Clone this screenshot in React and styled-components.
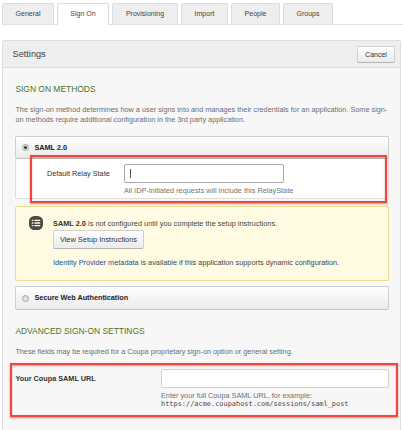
import React from "react";
import styled, { createGlobalStyle, css } from "styled-components";

const GlobalStyle = createGlobalStyle`
  *, *::before, *::after { box-sizing: border-box; }
  body {
    margin: 0;
    background: #fff;
    color: #444;
    font-family: "Liberation Sans", Arial, sans-serif;
    font-size: 7.3px;
    line-height: 9.5px;
    overflow: hidden;
  }
`;

const raised = css`
  border: 1px solid #d0d0d0;
  border-radius: 2px;
  background: linear-gradient(#fefefe, #ebebeb);
`;

const Page = styled.div`
  width: 403px;
  height: 430px;
  overflow: hidden;
  padding: 3px 0 0 2px;
`;

const TabBar = styled.nav`
  display: flex;
  gap: 3px;
  height: 22px;
  margin-bottom: 15px;
  border-bottom: 1px solid #e1e1e1;
`;

const Tab = styled.a`
  width: ${(p) => p.$width}px;
  height: ${(p) => (p.$active ? 22 : 21)}px;
  border: 1px solid #dcdcdc;
  border-bottom: 0;
  border-radius: 2px 2px 0 0;
  background: ${(p) => (p.$active ? "#fff" : "#eee")};
  line-height: 20px;
  font-size: 7px;
  text-align: center;
  white-space: nowrap;
`;

const Panel = styled.section`
  width: 399px;
  height: 400px;
  border: 1px solid #dedede;
  border-radius: 2px 2px 0 0;
  background: #f7f7f7;
`;

const PanelHeader = styled.header`
  display: flex;
  align-items: center;
  justify-content: space-between;
  height: 27px;
  padding: 0 5px 0 9.5px;
  border-bottom: 1px solid #dedede;
  background: #eee;
`;

const PanelTitle = styled.h1`
  margin: 0;
  font-size: 9.2px;
  font-weight: 400;
  line-height: 12px;
`;

const Button = styled.button`
  ${raised}
  display: block;
  width: ${(p) => p.$width}px;
  height: ${(p) => p.$height}px;
  padding: 0;
  border-bottom-color: #b5b5b5;
  color: #333;
  font-family: inherit;
  font-size: ${(p) => p.$size}px;
  white-space: nowrap;
`;

const PanelBody = styled.div`
  padding: 16px 11px 0 12.4px;
`;

const SectionTitle = styled.h2`
  margin: ${(p) => p.$top || 0}px 0 0;
  color: #4a7526;
  font-size: 8.45px;
  font-weight: 400;
  line-height: 11px;
  white-space: nowrap;
`;

const Intro = styled.p`
  margin: 10px 0 0;
  color: #6e6e6e;
  letter-spacing: ${(p) => p.$track || 0}px;
  white-space: nowrap;
`;

const Method = styled.div`
  position: relative;
  margin-top: ${(p) => p.$top}px;
`;

const MethodHeader = styled.div`
  ${raised}
  display: flex;
  align-items: center;
  gap: 5.5px;
  height: ${(p) => p.$height}px;
  padding-left: 5.5px;
  border-bottom-color: #c4c4c4;
`;

const MethodName = styled.strong`
  color: #222;
  letter-spacing: ${(p) => p.$track || 0}px;
`;

const Radio = styled.span`
  display: grid;
  place-items: center;
  width: 7px;
  height: 7px;
  border: 1px solid #a5a5a5;
  border-radius: 50%;
  background: linear-gradient(#d8d8d8, #ececec);

  &::after {
    content: "";
    width: 3px;
    height: 3px;
    border-radius: 50%;
    background: ${(p) => (p.$checked ? "#333" : "transparent")};
  }
`;

const MethodBody = styled.div`
  display: flex;
  height: 40px;
  padding: 5px 0 0 30.5px;
  border: 1px solid #dedede;
  border-top: 0;
  border-radius: 0 0 2px 2px;
  background: #fff;
`;

const FieldLabel = styled.label`
  width: ${(p) => p.$width}px;
  padding-top: ${(p) => p.$top}px;
  color: #333;
  font-weight: ${(p) => (p.$bold ? 700 : 400)};
  white-space: nowrap;
`;

const Field = styled.div`
  color: #737373;
  white-space: nowrap;
`;

const Input = styled.div`
  display: flex;
  align-items: center;
  width: ${(p) => p.$width}px;
  height: 19px;
  margin-bottom: 3px;
  padding-left: 5px;
  border: 1px solid ${(p) => (p.$focused ? "#aaa" : "#d1d1d1")};
  border-radius: 2px;
  background: #fff;
`;

const Caret = styled.span`
  width: 1px;
  height: 9px;
  background: #555;
`;

const Hint = styled.div`
  letter-spacing: ${(p) => p.$track || 0}px;
`;

const Code = styled.code`
  display: block;
  color: #444;
  font-family: "DejaVu Sans Mono", monospace;
  font-size: 6.93px;
`;

const Highlight = styled.div`
  position: absolute;
  left: ${(p) => p.$left}px;
  top: ${(p) => p.$top}px;
  width: ${(p) => p.$width}px;
  height: ${(p) => p.$height}px;
  border: 2px solid #f5443a;
  box-shadow: 0 1px 2px rgba(0, 0, 0, 0.35), inset 0 1px 2px rgba(0, 0, 0, 0.3);
  pointer-events: none;
`;

const Notice = styled.div`
  display: flex;
  gap: 10px;
  height: 75px;
  margin-top: 7px;
  padding: 9px 0 0 12.6px;
  border: 1px solid #eedf8c;
  border-radius: 2px;
  background: #fffbe3;
  white-space: nowrap;

  svg { flex: none; }
  strong { color: #333; }
`;

const NoticeContent = styled.div`
  padding-top: 2.5px;
`;

const NoticeText = styled.div`
  margin: ${(p) => p.$margin};
  letter-spacing: ${(p) => p.$track}px;
`;

const Link = styled.a`
  color: #1c4f94;
`;

const FieldRow = styled.div`
  position: relative;
  display: flex;
  margin-top: 12px;
`;

const TABS = [
  { label: "General", width: 52 },
  { label: "Sign On", width: 52, active: true },
  { label: "Provisioning", width: 66 },
  { label: "Import", width: 47 },
  { label: "People", width: 49 },
  { label: "Groups", width: 50 },
];

const ListIcon = () => (
  <svg width="14" height="14" viewBox="0 0 14 14">
    <rect width="14" height="14" rx="5.5" fill="#4a4a45" />
    <path d="M2.8 4.3h1.5M2.8 7h1.5M2.8 9.7h1.5M5.4 4.3h5.8M5.4 7h5.8M5.4 9.7h5.8" stroke="#fffbe3" strokeWidth="1.3" />
  </svg>
);

export default function App() {
  return (
    <Page>
      <GlobalStyle />
      <TabBar>
        {TABS.map((t) => (
          <Tab key={t.label} $width={t.width} $active={t.active}>{t.label}</Tab>
        ))}
      </TabBar>
      <Panel>
        <PanelHeader>
          <PanelTitle>Settings</PanelTitle>
          <Button $width={38} $height={17} $size={7}>Cancel</Button>
        </PanelHeader>
        <PanelBody>
          <SectionTitle>SIGN ON METHODS</SectionTitle>
          <Intro>
            The sign-on method determines how a user signs into and manages their credentials for an application. Some sign-
            <br />
            on methods require additional configuration in the 3rd party application.
          </Intro>
          <Method $top={12}>
            <MethodHeader $height={23}>
              <Radio $checked />
              <MethodName>SAML 2.0</MethodName>
            </MethodHeader>
            <MethodBody>
              <FieldLabel $width={77} $top={4.5}>Default Relay State</FieldLabel>
              <Field>
                <Input $width={160} $focused><Caret /></Input>
                <Hint $track={0.02}>All IDP-initiated requests will include this RelayState</Hint>
              </Field>
            </MethodBody>
            <Highlight $left={14.6} $top={19} $width={357} $height={48} />
          </Method>
          <Notice>
            <ListIcon />
            <NoticeContent>
              <NoticeText $margin="0 0 2px" $track={0.03}>
                <strong>SAML 2.0</strong> is not configured until you complete the setup instructions.
              </NoticeText>
              <Button $width={91} $height={19} $size={7.4}>View Setup Instructions</Button>
              <NoticeText $margin="9px 0 0" $track={0.02}>
                <Link>Identity Provider metadata</Link> is available if this application supports dynamic configuration.
              </NoticeText>
            </NoticeContent>
          </Notice>
          <Method $top={5}>
            <MethodHeader $height={24}>
              <Radio />
              <MethodName $track={-0.03}>Secure Web Authentication</MethodName>
            </MethodHeader>
          </Method>
          <SectionTitle $top={16}>ADVANCED SIGN-ON SETTINGS</SectionTitle>
          <Intro $track={-0.025}>These fields may be required for a Coupa proprietary sign-on option or general setting.</Intro>
          <FieldRow>
            <FieldLabel $bold $width={145.6} $top={5}>Your Coupa SAML URL</FieldLabel>
            <Field>
              <Input $width={228} />
              <Hint>Enter your full Coupa SAML URL, for example:</Hint>
              <Code>https://acme.coupahost.com/sessions/saml_post</Code>
            </Field>
            <Highlight $left={-5.4} $top={-6} $width={388} $height={54} />
          </FieldRow>
        </PanelBody>
      </Panel>
    </Page>
  );
}
